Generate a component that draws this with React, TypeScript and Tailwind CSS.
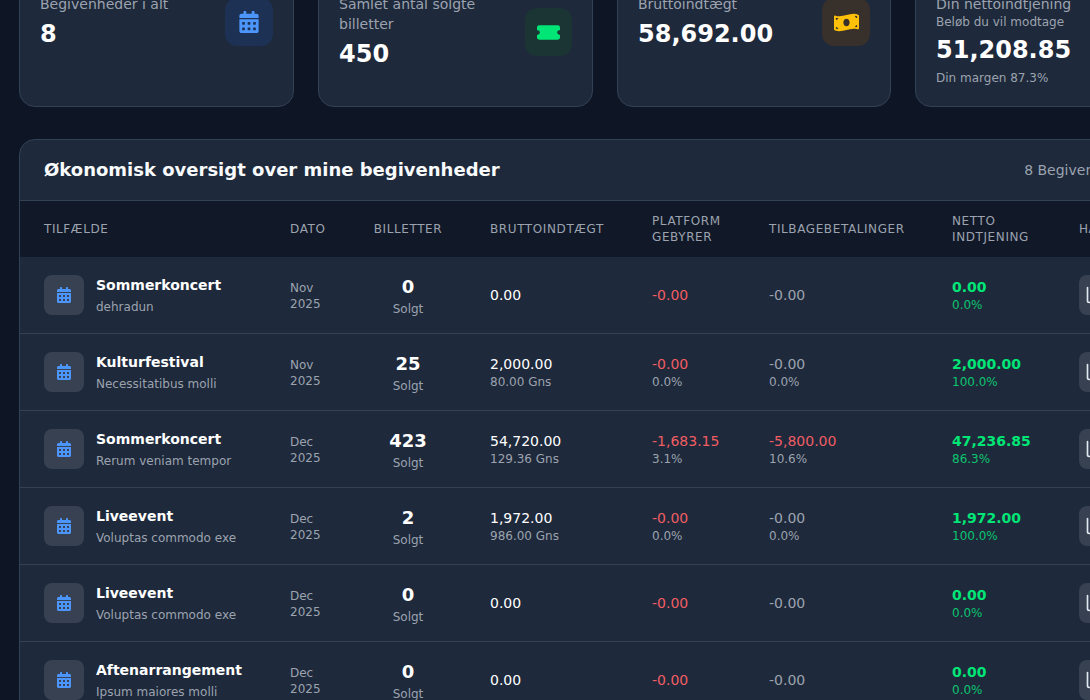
import { FaCalendarAlt, FaMoneyBillWave } from "react-icons/fa";
import { BsTicketFill } from "react-icons/bs";
import { ChartColumn } from "lucide-react";

type Row = {
  name: string; sub: string; mon: string; yr: string; sold: string;
  gross: string; avg?: string; fee: string; feeP?: string; ref: string; refP?: string; net: string; netP: string;
};

const rows: Row[] = [
  { name: "Sommerkoncert", sub: "dehradun", mon: "Nov", yr: "2025", sold: "0", gross: "0.00", fee: "-0.00", ref: "-0.00", net: "0.00", netP: "0.0%" },
  { name: "Kulturfestival", sub: "Necessitatibus molli", mon: "Nov", yr: "2025", sold: "25", gross: "2,000.00", avg: "80.00 Gns", fee: "-0.00", feeP: "0.0%", ref: "-0.00", refP: "0.0%", net: "2,000.00", netP: "100.0%" },
  { name: "Sommerkoncert", sub: "Rerum veniam tempor", mon: "Dec", yr: "2025", sold: "423", gross: "54,720.00", avg: "129.36 Gns", fee: "-1,683.15", feeP: "3.1%", ref: "-5,800.00", refP: "10.6%", net: "47,236.85", netP: "86.3%" },
  { name: "Liveevent", sub: "Voluptas commodo exe", mon: "Dec", yr: "2025", sold: "2", gross: "1,972.00", avg: "986.00 Gns", fee: "-0.00", feeP: "0.0%", ref: "-0.00", refP: "0.0%", net: "1,972.00", netP: "100.0%" },
  { name: "Liveevent", sub: "Voluptas commodo exe", mon: "Dec", yr: "2025", sold: "0", gross: "0.00", fee: "-0.00", ref: "-0.00", net: "0.00", netP: "0.0%" },
  { name: "Aftenarrangement", sub: "Ipsum maiores molli", mon: "Dec", yr: "2025", sold: "0", gross: "0.00", fee: "-0.00", ref: "-0.00", net: "0.00", netP: "0.0%" },
];

const font = { fontFamily: '"DejaVu Sans", sans-serif' };

function Card({ width, children }: { width: string; children: React.ReactNode }) {
  return (
    <div className={`${width} shrink-0 rounded-2xl border border-[#334155] bg-[#1e293b] p-5`}>
      <div className="flex items-center justify-between">{children}</div>
    </div>
  );
}

export default function App() {
  return (
    <div style={font} className="h-[700px] w-[1090px] overflow-hidden bg-[#0e1626]">
      <div className="-mt-[27px] pl-[19px] w-[1400px]">
        <div className="flex gap-6">
          <Card width="w-[275px]">
            <div>
              <div className="text-sm leading-5 text-[#9ca3af]">Begivenheder i alt</div>
              <div className="mt-1 text-2xl leading-8 font-bold text-white">8</div>
            </div>
            <div className="w-12 h-12 rounded-xl bg-[#1c3154] flex items-center justify-center">
              <FaCalendarAlt className="text-[#4c96fb] text-[22px]" />
            </div>
          </Card>
          <Card width="w-[275px]">
            <div className="w-[170px]">
              <div className="text-sm leading-5 text-[#9ca3af]">Samlet antal solgte billetter</div>
              <div className="mt-1 text-2xl leading-8 font-bold text-white">450</div>
            </div>
            <div className="w-[47px] h-12 rounded-xl bg-[#1a3534] flex items-center justify-center">
              <BsTicketFill className="text-[#00e676] text-[23px]" />
            </div>
          </Card>
          <Card width="w-[274px]">
            <div>
              <div className="text-sm leading-5 text-[#9ca3af]">Bruttoindtægt</div>
              <div className="mt-1 text-2xl leading-8 font-bold text-white">58,692.00</div>
            </div>
            <div className="w-12 h-12 rounded-xl bg-[#38302b] flex items-center justify-center">
              <FaMoneyBillWave className="text-[#ffc107] text-[25px]" />
            </div>
          </Card>
          <Card width="w-[275px]">
            <div>
              <div className="text-sm leading-5 text-[#9ca3af]">Din nettoindtjening</div>
              <div className="text-xs leading-4 text-[#9ca3af]">Beløb du vil modtage</div>
              <div className="mt-1 text-2xl leading-8 font-bold text-white">51,208.85</div>
              <div className="mt-1 text-xs leading-4 text-[#9ca3af]">Din margen 87.3%</div>
            </div>
          </Card>
        </div>

        <div className="mt-8 w-[1141px] rounded-2xl border border-[#334155] bg-[#1e293b] overflow-hidden">
          <div className="h-[61px] px-6 flex items-center justify-between border-b border-[#334155]">
            <h2 className="text-lg font-bold text-[#f8fafc]">Økonomisk oversigt over mine begivenheder</h2>
            <span className="text-sm text-[#9ca3af]">8 Begivenheder</span>
          </div>
          <table className="table-fixed border-separate border-spacing-0 w-[1200px]">
            <colgroup>
              <col className="w-[246px]" />
              <col className="w-[84px]" />
              <col className="w-[116px]" />
              <col className="w-[162px]" />
              <col className="w-[117px]" />
              <col className="w-[183px]" />
              <col className="w-[127px]" />
              <col />
            </colgroup>
            <thead>
              <tr className="h-[56px] bg-[#111827] text-xs leading-4 tracking-[0.6px] text-[#9ca3af] text-left uppercase">
                <th className="pl-6 font-normal">Tilfælde</th>
                <th className="pl-6 font-normal">Dato</th>
                <th className="font-normal text-center">Billetter</th>
                <th className="pl-6 font-normal">Bruttoindtægt</th>
                <th className="pl-6 font-normal">Platform Gebyrer</th>
                <th className="pl-6 font-normal">Tilbagebetalinger</th>
                <th className="pl-6 font-normal">Netto Indtjening</th>
                <th className="pl-6 font-normal">Handlinger</th>
              </tr>
            </thead>
            <tbody>
              {rows.map((r, i) => (
                <tr key={i} className="h-[77px] [&>td]:border-b [&>td]:border-[#334155]">
                  <td className="pl-6">
                    <div className="flex items-center gap-3">
                      <div className="w-10 h-10 rounded-lg bg-[#374151] flex items-center justify-center">
                        <FaCalendarAlt className="text-[#4c96fb] text-[16px]" />
                      </div>
                      <div>
                        <div className="text-sm leading-5 font-bold text-white">{r.name}</div>
                        <div className="mt-1 text-xs leading-4 text-[#9ca3af]">{r.sub}</div>
                      </div>
                    </div>
                  </td>
                  <td className="pl-6 text-xs leading-4 text-[#9ca3af]">
                    <div className="pt-[2px]">{r.mon}</div>
                    <div>{r.yr}</div>
                  </td>
                  <td className="text-center">
                    <div className="pt-[2px] text-lg leading-6 font-bold text-white">{r.sold}</div>
                    <div className="mt-[2px] text-xs leading-4 text-[#9ca3af]">Solgt</div>
                  </td>
                  <td className="pl-6">
                    <div className="text-sm leading-5 text-white">{r.gross}</div>
                    {r.avg && <div className="text-xs leading-4 text-[#9ca3af]">{r.avg}</div>}
                  </td>
                  <td className="pl-6">
                    <div className="text-sm leading-5 text-[#f05d63]">{r.fee}</div>
                    {r.feeP && <div className="text-xs leading-4 text-[#9ca3af]">{r.feeP}</div>}
                  </td>
                  <td className="pl-6">
                    <div className={`text-sm leading-5 ${r.ref === "-0.00" ? "text-[#9ca3af]" : "text-[#f05d63]"}`}>{r.ref}</div>
                    {r.refP && <div className="text-xs leading-4 text-[#9ca3af]">{r.refP}</div>}
                  </td>
                  <td className="pl-6">
                    <div className="text-sm leading-5 font-bold text-[#00e676]">{r.net}</div>
                    <div className="text-xs leading-4 text-[#0cc46f]">{r.netP}</div>
                  </td>
                  <td className="pl-6">
                    <div className="w-10 h-10 rounded-lg bg-[#374151] flex items-center pl-[6px]">
                      <ChartColumn size={20} className="text-[#e2e8f0]" />
                    </div>
                  </td>
                </tr>
              ))}
            </tbody>
          </table>
        </div>
      </div>
    </div>
  );
}
